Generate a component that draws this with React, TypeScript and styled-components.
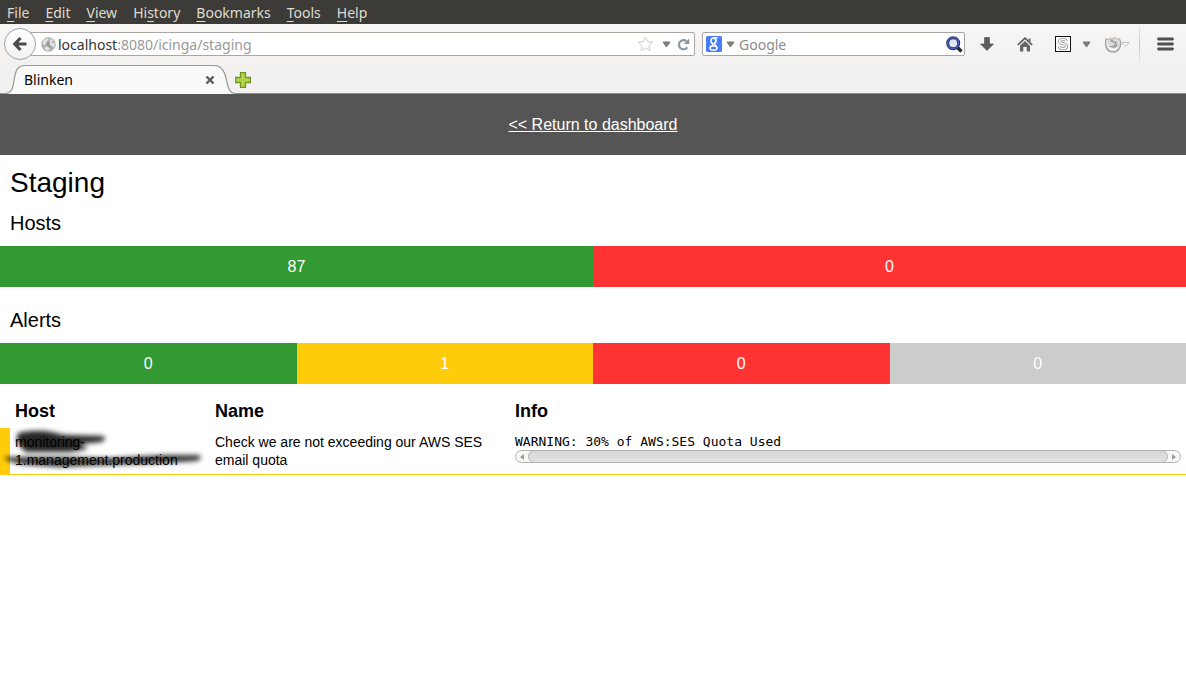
import React from 'react';
import styled, { createGlobalStyle } from 'styled-components';

const Global = createGlobalStyle`
  *, *::before, *::after { box-sizing: border-box; }
  body { margin: 0; background: #fff; color: #000; font-family: "Liberation Sans", Arial, sans-serif; font-size: 16px; }
  button { border: 0; padding: 0; background: none; font: inherit; color: inherit; }
  svg { display: block; flex: none; }
`;

const uiFont = '"Noto Sans", "Open Sans", sans-serif';

const Chrome = styled.header`
  font-family: ${uiFont};
  font-size: 14px;
`;

const MenuBar = styled.nav`
  display: flex;
  gap: 16px;
  height: 24px;
  padding: 0 7px;
  align-items: center;
  background: #3c3b37;
  color: #dfdbd2;
`;

const MenuItem = styled.button`
  line-height: 24px;
  padding-top: 2px;
`;

const Key = styled.span`
  text-decoration: underline;
  text-underline-offset: 3px;
`;

const Toolbar = styled.div`
  display: flex;
  align-items: center;
  height: 40px;
  padding: 0 0 0 4px;
  background: linear-gradient(#f7f6f5, #f2f1f0);
`;

const BackButton = styled.button`
  position: relative;
  z-index: 1;
  display: grid;
  place-items: center;
  flex: none;
  width: 32px;
  height: 32px;
  border: 1px solid #9aa4b3;
  border-radius: 50%;
  background: linear-gradient(#fff, #f3f2f1);
`;

const Field = styled.label<{ $width?: number }>`
  display: flex;
  align-items: center;
  height: 24px;
  min-width: 0;
  flex: ${p => (p.$width ? `0 0 ${p.$width}px` : '1 1 0')};
  border: 1px solid #aaa7a3;
  border-radius: 2px;
  background: #fff;
  color: #333;
`;

const AddressField = styled(Field)`
  margin: 0 7px 0 -16px;
  padding: 0 4px 0 20px;
`;

const SearchField = styled(Field)`
  padding: 0 1px 0 3px;
`;

const FieldInput = styled.input`
  flex: 1;
  min-width: 0;
  border: 0;
  padding: 0;
  outline: 0;
  background: none;
  font: inherit;
  color: #999;
  &::placeholder { color: #8c8c8c; opacity: 1; }
`;

const Origin = styled.span`
  margin-left: 2px;
`;

const IconButton = styled.button<{ $width: number }>`
  display: grid;
  place-items: center;
  flex: none;
  width: ${p => p.$width}px;
  height: 24px;
`;

const Actions = styled.div`
  display: flex;
  align-items: center;
  flex: none;
  padding-left: 3px;
`;

const ToolGroup = styled.div`
  display: flex;
  padding-left: 7px;
`;

const Separator = styled.span`
  width: 1px;
  height: 36px;
  margin: 0 4px 0 3px;
  background: linear-gradient(#e6e8ea, #b9c3d0, #e6e8ea);
`;

const TabBar = styled.div`
  display: flex;
  align-items: center;
  height: 30px;
  background: #f2f1f0;
  box-shadow: inset 0 -1px #8f8f8d;
`;

const Tab = styled.div`
  position: relative;
  display: flex;
  align-items: center;
  justify-content: space-between;
  width: 234px;
  height: 30px;
  padding: 2px 18px 0 24px;
  color: #000;
`;

const TabShape = styled.svg`
  position: absolute;
  left: 0;
  top: 0;
`;

const TabTitle = styled.span`
  position: relative;
  line-height: 28px;
`;

const TabClose = styled(IconButton)`
  position: relative;
`;

const NewTab = styled(IconButton)`
  padding-top: 2px;
`;

const Banner = styled.div`
  display: flex;
  justify-content: center;
  align-items: center;
  height: 61px;
  background: #555;
`;

const BannerLink = styled.a`
  color: #fff;
`;

const Main = styled.main`
  display: flex;
  flex-direction: column;
`;

const Title = styled.h1`
  margin: 10px 10px 0;
  font-size: 28px;
  line-height: 35px;
  font-weight: 400;
`;

const Heading = styled.h2`
  margin: 10px;
  font-size: 20px;
  line-height: 26px;
  font-weight: 400;
`;

const Bar = styled.div`
  display: flex;
  margin-bottom: 10px;
`;

const tones = { ok: '#339933', warning: '#ffcc0b', critical: '#ff3333', unknown: '#cccccc' };

const Count = styled.div<{ $tone: keyof typeof tones }>`
  flex: 1 1 0;
  height: 41px;
  line-height: 41px;
  text-align: center;
  color: #fff;
  background: ${p => tones[p.$tone]};
`;

const Table = styled.table`
  width: 100%;
  table-layout: fixed;
  border-collapse: separate;
  border-spacing: 0;
  font-size: 14px;
  line-height: 18px;
`;

const HeadCell = styled.th<{ $width?: number }>`
  width: ${p => (p.$width ? `${p.$width}px` : 'auto')};
  padding: 5px;
  text-align: left;
  font-size: 18px;
  line-height: 24px;
  &:first-child { padding-left: 15px; }
`;

const Cell = styled.td`
  position: relative;
  padding: 5px;
  vertical-align: top;
  border-bottom: 1px solid #ffcc0b;
  &:first-child { border-left: 10px solid #ffcc0b; }
`;

const HostName = styled.span`
  position: relative;
`;

const Smudge = styled.svg`
  position: absolute;
  left: -10px;
  top: 0;
  overflow: visible;
`;

const Output = styled.pre`
  margin: 0;
  font-family: "DejaVu Sans Mono", monospace;
  font-size: 13px;
  line-height: 17px;
`;

const ScrollTrack = styled.div`
  display: flex;
  height: 13px;
  border: 1px solid #b5b2ae;
  border-radius: 7px;
  background: #f6f6f5;
`;

const ScrollArrow = styled.button`
  display: grid;
  place-items: center;
  flex: none;
  width: 12px;
`;

const ScrollThumb = styled.div`
  flex: 1;
  margin: -1px 0;
  border: 1px solid #b5b2ae;
  border-radius: 7px;
  background: linear-gradient(#d8d7d5, #e3e2e0);
`;

const menus = [
  { name: 'File', key: 0 },
  { name: 'Edit', key: 0 },
  { name: 'View', key: 0 },
  { name: 'History', key: 2 },
  { name: 'Bookmarks', key: 0 },
  { name: 'Tools', key: 0 },
  { name: 'Help', key: 0 },
];

const Caret = () => (
  <svg width="9" height="7" viewBox="0 0 9 7">
    <path d="M1 1H8L4.500 6Z" fill="#808080" stroke="#666" strokeWidth="0.8" />
  </svg>
);

export default function App() {
  return (
    <>
      <Global />
      <Chrome>
        <MenuBar>
          {menus.map(({ name, key }) => (
            <MenuItem key={name}>
              {name.slice(0, key)}
              <Key>{name[key]}</Key>
              {name.slice(key + 1)}
            </MenuItem>
          ))}
        </MenuBar>
        <Toolbar>
          <BackButton aria-label="Back">
            <svg width="16" height="16" viewBox="0 0 16 16">
              <path d="M8.500 2 2.800 8l5.700 6M3 8h11.500" fill="none" stroke="#4b4b4b" strokeWidth="3.200" />
            </svg>
          </BackButton>
          <AddressField>
            <svg width="15" height="15" viewBox="0 0 15 15">
              <circle cx="7.500" cy="7.500" r="6.800" fill="#b4b4b4" stroke="#a3a3a3" strokeWidth="0.800" />
              <path d="M1.500 7l1.500-4 3-1.500 1.500 1-1.500 1.500-1 2-1.500 2zM9.500 1.500l2.500 2-2 1.500 1 1.500 2.500-1 .3 3-1.300 2-1.500-2-2-.5-.5-2zM4.500 9.500l3 .5 1 2-1.500 2-3-1.500z" fill="#e6e6e6" />
              <path d="M6.500 4.500l2.500 1-1 2.500 2.500 2-2 1-3-3z" fill="#979797" />
            </svg>
            <Origin>localhost</Origin>
            <FieldInput aria-label="Address" defaultValue=":8080/icinga/staging" />
            <IconButton $width={22} aria-label="Bookmark">
              <svg width="17" height="16" viewBox="0 0 17 16">
                <path d="M8.500 1l2.100 4.700 5.100.5-3.800 3.400 1.100 5-4.500-2.600L4 14.600l1.100-5L1.300 6.200l5.100-.5z" fill="#fff" stroke="#cdcdcd" strokeLinejoin="round" />
              </svg>
            </IconButton>
            <IconButton $width={20} aria-label="History"><Caret /></IconButton>
            <IconButton $width={14} aria-label="Reload">
              <svg width="13" height="13" viewBox="0 0 13 13">
                <path d="M10.300 9.400A4.600 4.600 0 1 1 9.500 3.200" fill="none" stroke="#8795a1" strokeWidth="2.200" />
                <path d="M12.200.5V6H6.800Z" fill="#8795a1" />
              </svg>
            </IconButton>
          </AddressField>
          <SearchField $width={263}>
            <svg width="16" height="16" viewBox="0 0 16 16">
              <rect width="16" height="16" rx="1.500" fill="#4a7df5" />
              <g fill="none" stroke="#fff" strokeWidth="1.500">
                <ellipse cx="7.400" cy="4.800" rx="2.400" ry="2.900" />
                <path d="M8 1.600h3.800M9.400 2.200c1.200 2 .8 3.600-.4 4.600-1.800 1.500.6 2.100 1.600 3.400M6.500 8c-.3 1.400.5 1.700 1.400 2.200" strokeWidth="1.200" />
                <ellipse cx="7.500" cy="12" rx="3.500" ry="2.300" />
              </g>
            </svg>
            <IconButton $width={17} aria-label="Choose search engine"><Caret /></IconButton>
            <FieldInput aria-label="Search" placeholder="Google" />
            <IconButton $width={18} aria-label="Search">
              <svg width="17" height="17" viewBox="0 0 17 17">
                <path d="M11 11l4.500 4.500" stroke="#222" strokeWidth="3.200" />
                <circle cx="7.200" cy="7.200" r="5.500" fill="#dfe6f8" stroke="#26306b" strokeWidth="3" />
                <circle cx="7.200" cy="7.200" r="5.500" fill="none" stroke="#4d62b8" strokeWidth="1.300" />
              </svg>
            </IconButton>
          </SearchField>
          <Actions>
            <IconButton $width={38} aria-label="Downloads">
              <svg width="14" height="14" viewBox="0 0 14 14">
                <path d="M4.500.5h5V7h4L7 13.500.5 7h4z" fill="#5d5d5b" stroke="#4d4d4b" strokeWidth="0.600" />
              </svg>
            </IconButton>
            <IconButton $width={38} aria-label="Home">
              <svg width="16" height="15" viewBox="0 0 16 15">
                <path d="M.8 8L8 1.200 15.200 8" fill="none" stroke="#555" strokeWidth="1.600" />
                <path d="M11.500 1.500h2v4l-2-2zM3 8.700l5-4.700 5 4.700v5.800H9.700V10H6.300v4.500H3z" fill="#666664" />
              </svg>
            </IconButton>
            <IconButton $width={38} aria-label="Scripts">
              <svg width="16" height="16" viewBox="0 0 16 16">
                <rect x="0.500" y="0.500" width="15" height="15" fill="#fff" stroke="#111" />
                <path d="M11.300 5.300C11 3.800 9.800 3.400 8 3.400 5.800 3.400 4.600 4.200 4.600 5.600 4.600 8.500 11.600 7 11.600 10.300 11.600 12 10 12.700 8 12.700 5.800 12.700 4.600 12 4.300 10.400" fill="none" stroke="#8c8c8c" strokeWidth="3" />
                <path d="M11.300 5.300C11 3.800 9.800 3.400 8 3.400 5.800 3.400 4.600 4.200 4.600 5.600 4.600 8.500 11.600 7 11.600 10.300 11.600 12 10 12.700 8 12.700 5.800 12.700 4.600 12 4.300 10.400" fill="none" stroke="#fff" strokeWidth="1.500" />
              </svg>
            </IconButton>
            <IconButton $width={9} aria-label="Script options"><Caret /></IconButton>
            <ToolGroup>
              <IconButton $width={38} aria-label="Firefox tools">
                <svg width="25" height="17" viewBox="0 0 25 17">
                  <circle cx="8" cy="8.500" r="7" fill="#dcdcdc" />
                  <path d="M1.300 2.500C0 6 .3 10 2 13c3 4 9 4 12 0 2-3 2-7 .5-10" fill="none" stroke="#a2a2a2" strokeWidth="1.300" />
                  <path d="M1.300 2.500l2 1.300 2-2 .7 2.200 3-1.800 1.500-.8 1.500 2 2.500-1" fill="none" stroke="#b0b0b0" />
                  <path d="M5 5.500l2.500-1 1 2 2.500-.5-1 3-2.500 2-3-1M8 11c2.500.5 4-1 4-3.500" fill="none" stroke="#929292" strokeWidth="1.100" />
                  <path d="M2.500 6.500c.5 4 2.500 6 6 6.300 2.500 0 4-1 5-3-.5 3.500-3 5-6 4.700-3-.4-5.500-3.500-5-8z" fill="#f8f8f8" />
                  <path d="M17 6.500h7l-3.500 4z" fill="#fff" stroke="#b5b5b5" strokeWidth="0.900" />
                </svg>
              </IconButton>
            </ToolGroup>
            <Separator />
            <IconButton $width={42} aria-label="Open menu">
              <svg width="17" height="14" viewBox="0 0 17 14">
                <path d="M1.500 2h14M1.500 7h14M1.500 12h14" stroke="#4f4f4d" strokeWidth="2.800" strokeLinecap="round" />
              </svg>
            </IconButton>
          </Actions>
        </Toolbar>
        <TabBar>
          <Tab>
            <TabShape width="236" height="30" viewBox="0 0 236 30">
              <path d="M6 30C13 28 13 22 14.500 14 16 4 19 1.500 25 1.500H214C220 1.500 224 5 226 14 228 22 228 28 235 30Z" fill="#f9f9f8" />
              <path d="M0 29.500H6C13 28.500 13 22 14.500 14 16 4 19 1.500 25 1.500H214C220 1.500 224 5 226 14 228 22 228 28.500 235 29.500" fill="none" stroke="#999" strokeWidth="1.200" />
            </TabShape>
            <TabTitle>Blinken</TabTitle>
            <TabClose $width={12} aria-label="Close tab">
              <svg width="10" height="10" viewBox="0 0 10 10">
                <path d="M1.500 1.500l7 7M8.500 1.500l-7 7" stroke="#5c5c5c" strokeWidth="2.400" />
              </svg>
            </TabClose>
          </Tab>
          <NewTab $width={18} aria-label="New tab">
            <svg width="16" height="16" viewBox="0 0 16 16">
              <path d="M5.500.7h5v4.800h4.800v5h-4.800v4.800h-5v-4.800H.7v-5h4.800z" fill="#b5d34a" stroke="#6d9723" strokeWidth="1.300" />
            </svg>
          </NewTab>
        </TabBar>
      </Chrome>
      <Banner>
        <BannerLink href="#dashboard">&lt;&lt; Return to dashboard</BannerLink>
      </Banner>
      <Main>
        <Title>Staging</Title>
        <Heading>Hosts</Heading>
        <Bar>
          <Count $tone="ok">87</Count>
          <Count $tone="critical">0</Count>
        </Bar>
        <Heading>Alerts</Heading>
        <Bar>
          <Count $tone="ok">0</Count>
          <Count $tone="warning">1</Count>
          <Count $tone="critical">0</Count>
          <Count $tone="unknown">0</Count>
        </Bar>
        <Table>
          <thead>
            <tr>
              <HeadCell $width={210}>Host</HeadCell>
              <HeadCell $width={300}>Name</HeadCell>
              <HeadCell>Info</HeadCell>
            </tr>
          </thead>
          <tbody>
            <tr>
              <Cell>
                <Smudge width="210" height="46" viewBox="0 0 210 46" aria-hidden="true">
                  <defs>
                    <filter id="soft" x="-10%" y="-40%" width="120%" height="180%">
                      <feGaussianBlur stdDeviation="2.6" />
                    </filter>
                  </defs>
                  <g filter="url(#soft)">
                    <path d="M18 5Q35 1 52 4L64 7 103 8Q108 11 101 14L80 16 88 21 70 24 26 24Q14 15 18 5Z" fill="#000" fillOpacity="0.85" />
                    <path d="M5 29L60 29 110 30 165 27 198 27Q205 30 196 33L165 35 110 37 60 39 28 37Q4 34 5 29Z" fill="#000" fillOpacity="0.8" />
                  </g>
                </Smudge>
                <HostName>monitoring-<br />1.management.production</HostName>
              </Cell>
              <Cell>Check we are not exceeding our AWS SES email quota</Cell>
              <Cell>
                <Output>WARNING: 30% of AWS:SES Quota Used</Output>
                <ScrollTrack>
                  <ScrollArrow aria-label="Scroll left">
                    <svg width="4" height="6" viewBox="0 0 4 6"><path d="M4 0v6L0 3z" fill="#999" /></svg>
                  </ScrollArrow>
                  <ScrollThumb />
                  <ScrollArrow aria-label="Scroll right">
                    <svg width="4" height="6" viewBox="0 0 4 6"><path d="M0 0v6l4-3z" fill="#999" /></svg>
                  </ScrollArrow>
                </ScrollTrack>
              </Cell>
            </tr>
          </tbody>
        </Table>
      </Main>
    </>
  );
}
